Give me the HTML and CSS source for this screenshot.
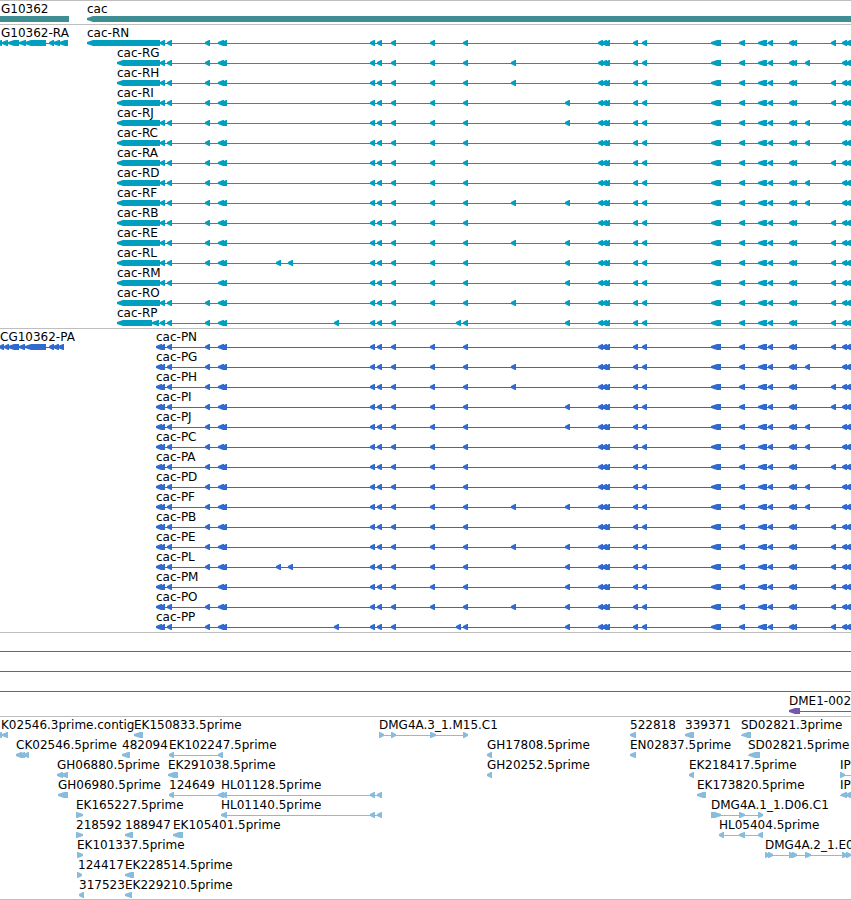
FILE: index.html
```
<!DOCTYPE html>
<html lang="en">
  <head>
    <meta charset="UTF-8" />
    <meta name="viewport" content="width=device-width, initial-scale=1.0" />
    <title>cac - Genome Browser</title>
    <link rel="stylesheet" href="styles.css">
  </head>
  <body>
    <main class="browser">
      <section class="track gene" id="genes" aria-label="Genes"></section>
      <section class="track transcript" id="transcripts" aria-label="Transcripts"></section>
      <section class="track protein" id="proteins" aria-label="Proteins"></section>
      <section class="track match" id="matches" aria-label="Matches"></section>
      <section class="track est" id="ests" aria-label="ESTs"></section>
    </main>

    <script src="script.js"></script>
  </body>
</html>
```

FILE: styles.css
```
body {
  margin: 0;
  background: #ffffff;
  color: #000000;
  font-family: "DejaVu Sans", sans-serif;
  font-size: 12px;
}

.browser {
  overflow: hidden;
  border-bottom: 1px solid #bebebe;
}

.track {
  border-top: 1px solid #bebebe;
  padding: 1px 0 2px;
}

.track:last-child {
  padding-bottom: 1px;
}

.row {
  position: relative;
  height: 20px;
}

/* features sit at their own place along the sequence */
.feature {
  position: absolute;
  top: 0;
}

.label {
  display: block;
  height: 14px;
  line-height: 14px;
  white-space: nowrap;
}

.glyph {
  display: block;
  width: 1px;
  height: 6px;
  overflow: visible;
  fill: currentColor;
}

.gene .glyph {
  color: #3f8e94;
}

.transcript .glyph {
  color: #009fc0;
}

.protein .glyph {
  color: #316ace;
}

.match .glyph {
  color: #7357a8;
}

.est .glyph {
  color: #87bcdd;
}
```

FILE: script.js
```
// anything that runs off the right edge is cut by the page
const END = 4000;

// exons shared by every cac isoform
const shared = [
  [167, 172], [218, 224], [222, 227], [370, 375], [377, 382], [391, 396],
  [463, 468], [598, 603], [602, 607], [605, 610], [633, 638], [642, 647],
  [711, 721], [739, 745], [758, 767], [768, 773], [789, 794], [792, 797],
  [842, 847], [846, 851]
];

// optional exons, by name
const optional = {
  a: [205, 210],
  b: [276, 281],
  c: [288, 293],
  d: [334, 339],
  e: [430, 435],
  f: [456, 461],
  g: [511, 516],
  h: [565, 570],
  i: [805, 810],
  j: [831, 836]
};

const isoforms = [
  ['N', 'aej'], ['G', 'aegi'], ['H', 'aegj'], ['I', 'aehj'], ['J', 'aehi'],
  ['C', 'aei'], ['A', 'aej'], ['D', 'aei'], ['F', 'aeghi'], ['B', 'aej'],
  ['E', 'aeghj'], ['L', 'abcehj'], ['M', 'ehj'], ['O', 'aeghj'], ['P', 'adfhj']
];

function isoform(prefix, name, used, first) {
  const exons = first.concat(shared, [...used].map((key) => optional[key]));
  return [prefix + name, exons[0][0], exons, -1, END];
}

// each feature: label, start, exons, strand, end of the line
const genes = [[
  ['G10362', 1, [[0, 69]], 0],
  ['cac', 87, [[87, END]], -1]
]];

const transcripts = isoforms.map(([name, used]) => {
  let first = [[117, 160], [160, 165]];
  if (name === 'N') first = [[87, 160], [160, 165]];
  if (name === 'P') first = [[117, 152], [152, 159], [160, 165]];
  return [isoform('cac-R', name, used, first)];
});
transcripts[0].unshift(['G10362-RA', 1,
  [[-4, 2], [2, 8], [8, 19], [19, 26], [25, 46], [49, 54], [53, 60], [59, 68]], -1]);

const proteins = isoforms.map(([name, used]) =>
  [isoform('cac-P', name, used, [[156, 162], [160, 165]])]);
proteins[0].unshift(['CG10362-PA', 0,
  [[-1, 4], [4, 9], [8, 19], [19, 25], [25, 46], [49, 54], [53, 59], [58, 64]], -1]);

const matches = [
  [['', 0, [], -1, END]],
  [['', 0, [], -1, END]],
  [['', 0, [], -1, END]],
  [['DME1-002', 789, [[789, 800]], -1, END]]
];

const ests = [
  [
    ['K02546.3prime.contig', 1, [[-4, 2], [2, 8]], -1],
    ['EK150833.5prime', 134, [[134, 143]], -1],
    ['DMG4A.3_1.M15.C1', 379, [[379, 384], [391, 396], [430, 436], [463, 468]], 1],
    ['522818', 630, [[630, 636]], -1],
    ['339371', 685, [[685, 694]], -1],
    ['SD02821.3prime', 741, [[742, 751]], -1]
  ],
  [
    ['CK02546.5prime', 16, [[16, 22], [20, 25], [24, 29]], -1],
    ['482094', 122, [[122, 130]], -1],
    ['EK102247.5prime', 169, [[169, 174], [218, 223]], -1],
    ['GH17808.5prime', 487, [[487, 492]], -1],
    ['EN02837.5prime', 630, [[630, 636]], -1],
    ['SD02821.5prime', 748, [[749, 760]], -1]
  ],
  [
    ['GH06880.5prime', 57, [[57, 63], [61, 68]], -1],
    ['EK291038.5prime', 168, [[168, 178]], -1],
    ['GH20252.5prime', 487, [[487, 492]], -1],
    ['EK218417.5prime', 689, [[689, 694]], -1],
    ['IP', 840, [[840, 845]], 1, END]
  ],
  [
    ['GH06980.5prime', 58, [[58, 68]], -1],
    ['124649', 169, [[169, 174], [218, 224]], -1],
    ['HL01128.5prime', 221, [[221, 227], [370, 375], [377, 382]], -1],
    ['EK173820.5prime', 697, [[697, 706]], -1],
    ['IP', 840, [[841, 847], [846, 851]], -1, END]
  ],
  [
    ['EK165227.5prime', 76, [[76, 83]], 1],
    ['HL01140.5prime', 221, [[221, 227], [370, 375], [377, 382]], -1],
    ['DMG4A.1_1.D06.C1', 711, [[711, 721], [739, 745], [758, 763]], 1]
  ],
  [
    ['218592', 76, [[76, 83]], 1],
    ['188947', 125, [[125, 133]], -1],
    ['EK105401.5prime', 173, [[173, 183]], -1],
    ['HL05404.5prime', 719, [[719, 724], [739, 745], [758, 763]], -1]
  ],
  [
    ['EK101337.5prime', 77, [[77, 83]], 1],
    ['DMG4A.2_1.E0', 765,
      [[765, 769], [768, 773], [789, 794], [792, 797], [805, 811], [842, 847], [846, 851]], 1, END]
  ],
  [
    ['124417', 78, [[77, 82]], 1],
    ['EK228514.5prime', 125, [[125, 134]], -1]
  ],
  [
    ['317523', 79, [[79, 84]], -1],
    ['EK229210.5prime', 125, [[125, 132]], -1]
  ]
];

// box with an arrow head on the side the strand points to
function exonPath(from, to, strand) {
  const head = Math.min(6, to - from - 1);
  if (strand < 0) {
    return `M${from} 2 L${from + head} 0 H${to} V6 H${from + head} L${from} 4 Z`;
  }
  if (strand > 0) {
    return `M${to} 2 L${to - head} 0 H${from} V6 H${to - head} L${to} 4 Z`;
  }
  return `M${from} 0 H${to} V6 H${from} Z`;
}

function drawFeature([name, start, exons, strand, lineEnd]) {
  const stop = lineEnd || Math.max(...exons.map((exon) => exon[1]));
  const path = exons
    .map(([from, to]) => exonPath(from - start, to - start, strand))
    .join(' ');
  return `
    <div class="feature" style="left: ${start}px">
      <span class="label">${name}</span>
      <svg class="glyph" aria-hidden="true">
        <rect x="0" y="3" width="${stop - start}" height="1" />
        <path d="${path}" />
      </svg>
    </div>`;
}

function drawTrack(id, rows) {
  document.getElementById(id).innerHTML = rows
    .map((row) => `<div class="row">${row.map(drawFeature).join('')}</div>`)
    .join('');
}

drawTrack('genes', genes);
drawTrack('transcripts', transcripts);
drawTrack('proteins', proteins);
drawTrack('matches', matches);
drawTrack('ests', ests);
```
